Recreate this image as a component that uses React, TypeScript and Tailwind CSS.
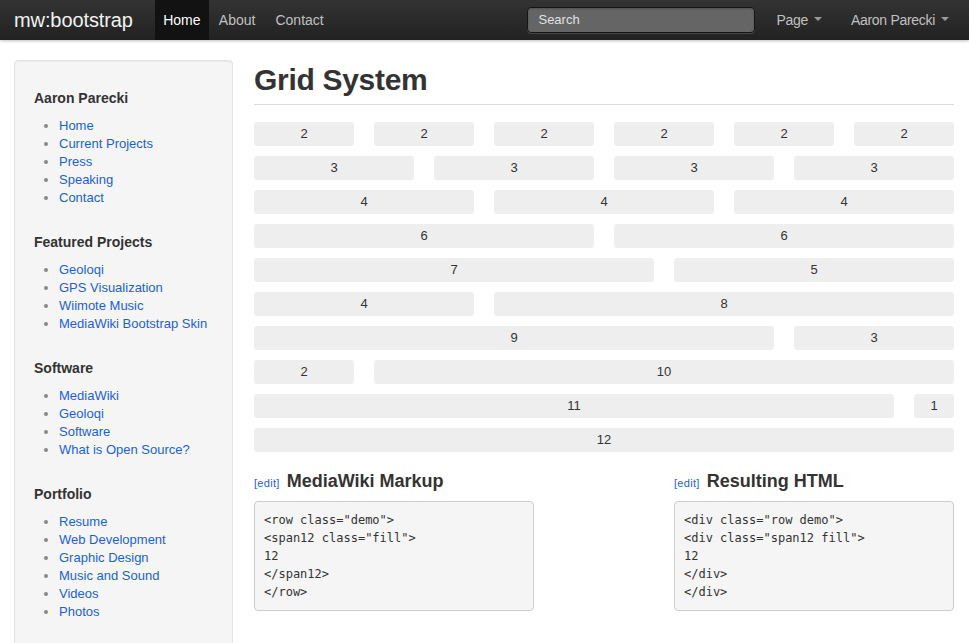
const sidebar = [
  {
    title: 'Aaron Parecki',
    links: ['Home', 'Current Projects', 'Press', 'Speaking', 'Contact'],
  },
  {
    title: 'Featured Projects',
    links: ['Geoloqi', 'GPS Visualization', 'Wiimote Music', 'MediaWiki Bootstrap Skin'],
  },
  {
    title: 'Software',
    links: ['MediaWiki', 'Geoloqi', 'Software', 'What is Open Source?'],
  },
  {
    title: 'Portfolio',
    links: ['Resume', 'Web Development', 'Graphic Design', 'Music and Sound', 'Videos', 'Photos'],
  },
]

const rows: number[][] = [
  [2, 2, 2, 2, 2, 2],
  [3, 3, 3, 3],
  [4, 4, 4],
  [6, 6],
  [7, 5],
  [4, 8],
  [9, 3],
  [2, 10],
  [11, 1],
  [12],
]

const spanClass: Record<number, string> = {
  1: 'col-span-1',
  2: 'col-span-2',
  3: 'col-span-3',
  4: 'col-span-4',
  5: 'col-span-5',
  6: 'col-span-6',
  7: 'col-span-7',
  8: 'col-span-8',
  9: 'col-span-9',
  10: 'col-span-10',
  11: 'col-span-11',
  12: 'col-span-12',
}

const Caret = () => (
  <span className="ml-[6px] inline-block w-0 h-0 border-x-[4px] border-x-transparent border-t-[4px] border-t-[#999] align-middle mt-[-2px]" />
)

const Navbar = () => (
  <div className="h-10 bg-gradient-to-b from-[#333] to-[#222] shadow-[0_1px_3px_rgba(0,0,0,0.25)] flex items-stretch relative z-10">
    <a className="pl-[14px] pr-[22px] flex items-center text-[20px] text-[#f2f2f2] tracking-[-0.1px]">mw:bootstrap</a>
    <div className="flex items-stretch text-[14px]">
      <a className="px-[9px] w-[54px] justify-center flex items-center bg-[#121212] text-white">Home</a>
      <a className="px-[10px] flex items-center text-[#c0c0c0]">About</a>
      <a className="px-[10px] flex items-center text-[#c0c0c0]">Contact</a>
    </div>
    <div className="flex-1" />
    <div className="flex items-center">
      <div className="w-[228px] h-[26px] rounded-[4px] bg-[#656565] border border-[#151515] shadow-[inset_0_1px_2px_rgba(0,0,0,0.2),0_1px_0_rgba(255,255,255,0.15)] flex items-center px-[10px] text-[13px] text-[#e0e0e0]">
        Search
      </div>
    </div>
    <div className="flex items-stretch text-[14px] tracking-[-0.3px] ml-[11px] pr-[10px]">
      <a className="px-[10px] flex items-center text-[#c0c0c0]">Page<Caret /></a>
      <a className="px-[10px] ml-[9px] flex items-center text-[#c0c0c0]">Aaron Parecki<Caret /></a>
    </div>
  </div>
)

const Sidebar = () => (
  <div className="w-[219px] shrink-0 bg-[#f5f5f5] border border-[#e3e3e3] rounded-[4px] pl-[19px] pr-[10px] pt-[28px] pb-[40px] shadow-[inset_0_1px_1px_rgba(0,0,0,0.05)]">
    {sidebar.map((s) => (
      <div key={s.title} className="mb-[26px]">
        <h3 className="text-[14px] leading-[18px] font-bold text-[#333] mb-[10px]">{s.title}</h3>
        <ul className="list-disc pl-[25px] marker:text-[#888] text-[13px] leading-[18px]">
          {s.links.map((l) => (
            <li key={l}>
              <a className="text-[#1b5fd9]">{l}</a>
            </li>
          ))}
        </ul>
      </div>
    ))}
  </div>
)

const codeLeft = ['<row class="demo">', '<span12 class="fill">', '12', '</span12>', '</row>']
const codeRight = ['<div class="row demo">', '<div class="span12 fill">', '12', '</div>', '</div>']

const CodeBlock = ({ title, lines }: { title: string; lines: string[] }) => (
  <div>
    <h2 className="flex items-baseline mb-[9px]">
      <span className="text-[11px] tracking-[0.3px] text-[#1b5fd9] mr-[7px]">[edit]</span>
      <span className="text-[18px] leading-[22px] font-bold text-[#333]">{title}</span>
    </h2>
    <pre className="w-[280px] bg-[#f5f5f5] border border-[#ccc] rounded-[4px] px-[9px] pt-[9px] pb-[9px] text-[12px] leading-[18px] text-[#333] font-['DejaVu_Sans_Mono',monospace]">
      {lines.join('\n')}
    </pre>
  </div>
)

export default function App() {
  return (
    <div className="bg-white font-['Liberation_Sans',Arial,sans-serif] text-[#333] overflow-hidden h-[643px]">
      <Navbar />
      <div className="flex pl-[14px] pt-[20px] gap-[21px]">
        <Sidebar />
        <div className="w-[700px]">
          <h1 className="text-[30px] leading-[36px] font-bold text-[#333] pt-[2px] pb-[6px] border-b border-[#ddd] tracking-[-0.3px]">
            Grid System
          </h1>
          <div className="mt-[17px]">
            {rows.map((r, i) => (
              <div key={i} className="grid grid-cols-12 gap-x-5 mb-[10px]">
                {r.map((n, j) => (
                  <div
                    key={j}
                    className={`${spanClass[n]} h-[24px] bg-[#eee] rounded-[3px] flex items-center justify-center text-[13px] text-[#333]`}
                  >
                    {n}
                  </div>
                ))}
              </div>
            ))}
          </div>
          <div className="grid grid-cols-12 gap-x-5 mt-[18px]">
            <div className="col-span-7">
              <CodeBlock title="MediaWiki Markup" lines={codeLeft} />
            </div>
            <div className="col-span-5">
              <CodeBlock title="Resulting HTML" lines={codeRight} />
            </div>
          </div>
        </div>
      </div>
    </div>
  )
}
